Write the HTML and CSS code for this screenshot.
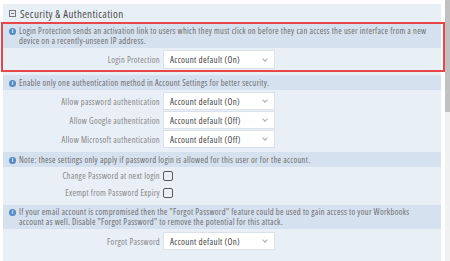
FILE: index.html
```html
<!DOCTYPE html>
<html lang="en">
<head>
    <meta charset="utf-8">
    <title>Security &amp; Authentication</title>
    <link rel="stylesheet" href="styles.css">
</head>
<body>
    <div class="window">
        <div class="page">
            <div class="panel">
                <div class="panel-head">
                    <svg class="toggle" width="7" height="7" viewBox="0 0 7 7"><rect x="0.5" y="0.5" width="6" height="6" fill="none" stroke="#777"/><path d="M2 3.5h3" stroke="#777"/></svg>
                    Security &amp; Authentication
                </div>

                <div class="highlight">
                    <div class="info info-2">
                        <span class="info-icon">i</span>
                        <p>Login Protection sends an activation link to users which they must click on before they can access the user interface from a new<br>device on a recently-unseen IP address.</p>
                    </div>
                    <div class="field field-login">
                        <label>Login Protection</label>
                        <div class="select">Account default (On)<span class="chev"></span></div>
                    </div>
                </div>

                <div class="info info-1 after-hl">
                    <span class="info-icon">i</span>
                    <p>Enable only one authentication method in Account Settings for better security.</p>
                </div>
                <div class="group group-auth">
                    <div class="field">
                        <label>Allow password authentication</label>
                        <div class="select">Account default (On)<span class="chev"></span></div>
                    </div>
                    <div class="field">
                        <label>Allow Google authentication</label>
                        <div class="select">Account default (Off)<span class="chev"></span></div>
                    </div>
                    <div class="field">
                        <label>Allow Microsoft authentication</label>
                        <div class="select">Account default (Off)<span class="chev"></span></div>
                    </div>
                </div>

                <div class="info info-1">
                    <span class="info-icon">i</span>
                    <p>Note: these settings only apply if password login is allowed for this user or for the account.</p>
                </div>
                <div class="group group-checks">
                    <div class="field check-row">
                        <label>Change Password at next login</label>
                        <span class="checkbox"></span>
                    </div>
                    <div class="field check-row">
                        <label>Exempt from Password Expiry</label>
                        <span class="checkbox"></span>
                    </div>
                </div>

                <div class="info info-2">
                    <span class="info-icon">i</span>
                    <p>If your email account is compromised then the "Forgot Password" feature could be used to gain access to your Workbooks<br>account as well. Disable "Forgot Password" to remove the potential for this attack.</p>
                </div>
                <div class="group group-forgot">
                    <div class="field">
                        <label>Forgot Password</label>
                        <div class="select">Account default (On)<span class="chev"></span></div>
                    </div>
                </div>
            </div>
        </div>
        <div class="scrollbar"><div class="thumb"></div></div>
    </div>
</body>
</html>
```

FILE: styles.css
```css
body {
    margin: 0;
    font-family: "Open Sans", "Liberation Sans", sans-serif;
    font-stretch: 75%;
    letter-spacing: 0.3px;
    color: #555;
    background-color: #fff;
}
.window {
    display: flex;
    height: 261px;
    overflow: hidden;
}
.page {
    flex: 1;
    padding: 4px 4px 0 3px;
}
.panel {
    background-color: #e9eff7;
    min-height: 600px;
}
.panel-head {
    display: flex;
    align-items: center;
    gap: 4px;
    height: 18px;
    padding-left: 6px;
    font-size: 11px;
    letter-spacing: 0.35px;
    color: #505050;
}
.highlight {
    margin: 0 -4px 0 -2px;
    padding-right: 2px;
    border: 2px solid #e8474a;
}
.info {
    display: flex;
    align-items: flex-start;
    gap: 3px;
    padding-left: 6px;
    background-color: #d6e1ef;
    font-size: 8.5px;
    line-height: 10px;
    color: #6c6c6c;
}
.info p {
    margin: 0;
}
.info-1 {
    padding-top: 3px;
    padding-bottom: 2px;
}
.info-2 {
    padding-top: 2px;
    padding-bottom: 2px;
}
.after-hl {
    margin-top: 3px;
}
.info-icon {
    flex: none;
    width: 7px;
    height: 7px;
    margin-top: 1.5px;
    border-radius: 50%;
    background-color: #4f8bc8;
    color: #fff;
    font-size: 6px;
    line-height: 7px;
    font-weight: bold;
    letter-spacing: 0;
    text-align: center;
}
.field {
    display: flex;
    align-items: center;
    gap: 3px;
    height: 18px;
    font-size: 8.5px;
}
.field label {
    width: 157px;
    text-align: right;
    color: #858585;
}
.field-login {
    height: 19px;
    padding: 2px 0 1px;
}
.field-login .select {
    height: 19px;
}
.select {
    display: flex;
    align-items: center;
    justify-content: space-between;
    box-sizing: border-box;
    width: 112px;
    height: 18px;
    padding: 0 7px 0 6px;
    background-color: #fff;
    border: 1px solid #dbe2eb;
    font-size: 9px;
    color: #444;
}
.chev {
    width: 3px;
    height: 3px;
    margin-bottom: 2px;
    border-right: 1px solid #aaa;
    border-bottom: 1px solid #aaa;
    transform: rotate(45deg);
}
.group-auth {
    display: flex;
    flex-direction: column;
    gap: 1px;
    padding: 2px 0 4px;
}
.group-checks {
    padding-bottom: 4px;
}
.check-row {
    height: 17px;
}
.checkbox {
    box-sizing: border-box;
    width: 10px;
    height: 10px;
    border: 1.5px solid #5a5a5a;
    border-radius: 2px;
}
.group-forgot {
    padding-top: 3px;
}
.scrollbar {
    flex: none;
    width: 5px;
    background-color: #f1f1f1;
}
.thumb {
    height: 112px;
    background-color: #c1c1c1;
}
```
